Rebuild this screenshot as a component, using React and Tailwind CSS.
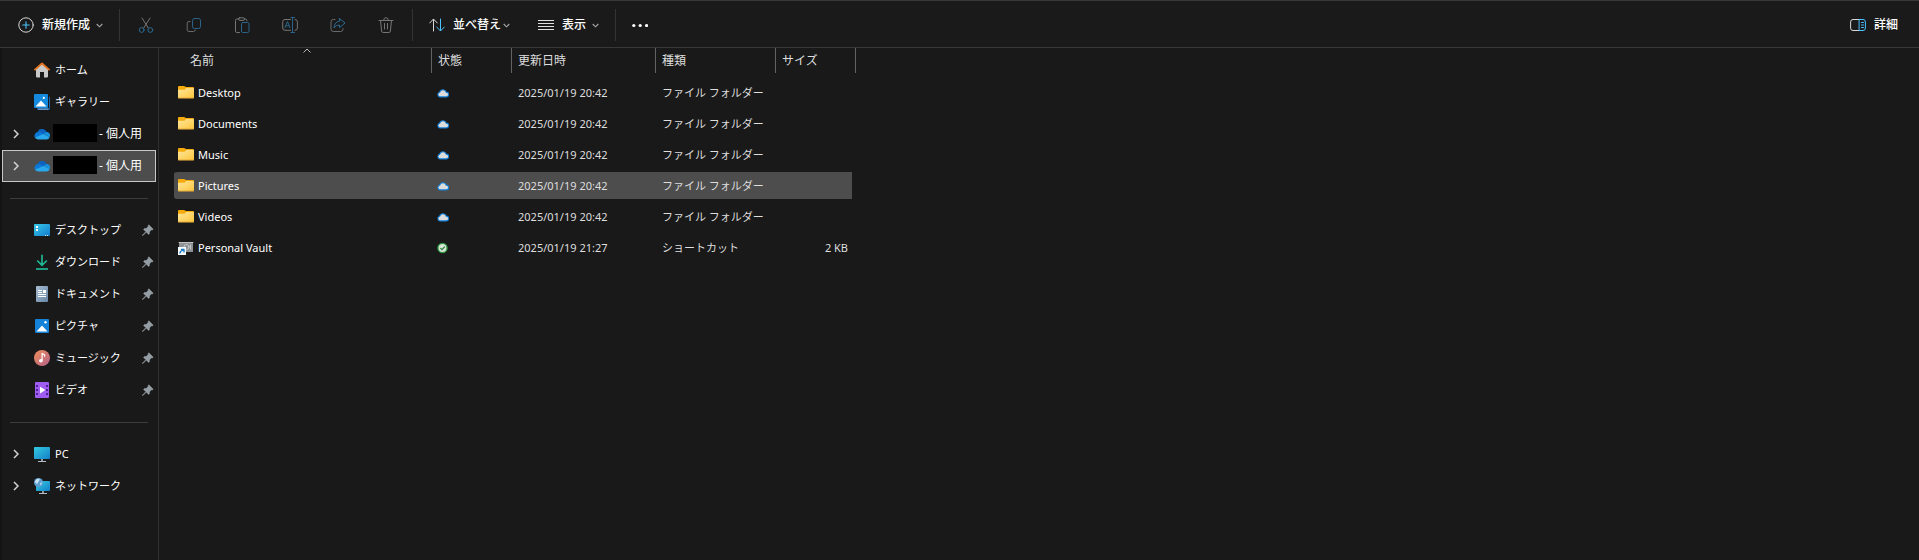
import React, { useState } from "react";

const quickAccess = [
  { name: "デスクトップ", icon: "desktop" },
  { name: "ダウンロード", icon: "download" },
  { name: "ドキュメント", icon: "document" },
  { name: "ピクチャ", icon: "picture" },
  { name: "ミュージック", icon: "music" },
  { name: "ビデオ", icon: "video" },
];

const files = [
  { name: "Desktop", date: "2025/01/19 20:42", type: "ファイル フォルダー", size: "" },
  { name: "Documents", date: "2025/01/19 20:42", type: "ファイル フォルダー", size: "" },
  { name: "Music", date: "2025/01/19 20:42", type: "ファイル フォルダー", size: "" },
  { name: "Pictures", date: "2025/01/19 20:42", type: "ファイル フォルダー", size: "" },
  { name: "Videos", date: "2025/01/19 20:42", type: "ファイル フォルダー", size: "" },
  {
    name: "Personal Vault",
    date: "2025/01/19 21:27",
    type: "ショートカット",
    size: "2 KB",
    shortcut: true,
  },
];

const Svg = ({ children, className = "" }) => (
  <svg
    viewBox="0 0 16 16"
    fill="none"
    strokeLinecap="round"
    strokeLinejoin="round"
    className={`w-4 h-4 shrink-0 ${className}`}
    aria-hidden="true"
  >
    {children}
  </svg>
);

const ChevronDown = () => (
  <svg viewBox="0 0 7 5" fill="none" className="w-[7px] h-[5px] shrink-0" aria-hidden="true">
    <path d="M0.7 1L3.5 3.8L6.3 1" stroke="#a8a8a8" strokeWidth="1.1" />
  </svg>
);

const ChevronRight = () => (
  <svg viewBox="0 0 6 10" fill="none" className="w-[6px] h-[10px]" aria-hidden="true">
    <path d="M1 1L5 5L1 9" stroke="#d6d6d6" strokeWidth="1.5" />
  </svg>
);

const Divider = () => <div className="w-px h-8 bg-[#333333] shrink-0" />;

const editTools = [
  {
    label: "切り取り",
    icon: (
      <Svg>
        <path d="M4 1L10.3 11M12 1L5.7 11" stroke="#757575" />
        <circle cx="3.7" cy="13" r="2.4" stroke="#2b6a90" />
        <circle cx="12.3" cy="13" r="2.4" stroke="#2b6a90" />
      </Svg>
    ),
  },
  {
    label: "コピー",
    icon: (
      <Svg>
        <path
          d="M4 4.5H3A1.8 1.8 0 0 0 1.2 6.3V12.7A1.8 1.8 0 0 0 3 14.5H7.5A1.8 1.8 0 0 0 9.3 13"
          stroke="#6a6a6a"
        />
        <rect x="6.5" y="1.5" width="8" height="10" rx="2" stroke="#2b6488" />
      </Svg>
    ),
  },
  {
    label: "貼り付け",
    icon: (
      <Svg>
        <path
          d="M5 2H2.8A1.3 1.3 0 0 0 1.5 3.3V14.2A1.3 1.3 0 0 0 2.8 15.5H5.5M10 2H11.5A1.3 1.3 0 0 1 12.8 3.3V3.8"
          stroke="#757575"
        />
        <rect x="4.5" y="0.8" width="6" height="2.6" rx="1.2" stroke="#757575" />
        <rect x="7.5" y="5.5" width="7.5" height="10" rx="1.3" stroke="#2b6488" />
      </Svg>
    ),
  },
  {
    label: "名前の変更",
    icon: (
      <Svg>
        <path
          d="M8.5 2.5H3A2.3 2.3 0 0 0 0.7 4.8V11A2.3 2.3 0 0 0 3 13.3H8.5M13 2.5A2.3 2.3 0 0 1 15.4 4.8V11A2.3 2.3 0 0 1 13 13.3"
          stroke="#757575"
        />
        <path d="M3 10.8L5.5 4.5L8 10.8M3.9 8.8H7.1" stroke="#2b6488" />
        <path d="M9 0.5H12.6M9 15.5H12.6M10.5 0.5V15.5" stroke="#2b6488" />
      </Svg>
    ),
  },
  {
    label: "共有",
    icon: (
      <Svg>
        <path
          d="M5 2.5H3.3A2.3 2.3 0 0 0 1 4.8V12.2A2.3 2.3 0 0 0 3.3 14.5H10.7A2.3 2.3 0 0 0 13 12.2V11.5"
          stroke="#6a6a6a"
        />
        <path
          d="M9.5 1.5L15 6L9.5 10.5V8.1C7 8.1 5.3 8.9 4 11C4.2 7 6.2 4.4 9.5 4.1Z"
          stroke="#2b6a90"
        />
      </Svg>
    ),
  },
  {
    label: "削除",
    icon: (
      <Svg>
        <path
          d="M1 3.5H15M5.7 3A2.3 2.3 0 0 1 10.3 3M2.5 3.5L3.6 14A1.6 1.6 0 0 0 5.2 15.5H10.8A1.6 1.6 0 0 0 12.4 14L13.5 3.5M6.5 6.5V12M9.5 6.5V12"
          stroke="#757575"
        />
      </Svg>
    ),
  },
];

const Cloud = () => (
  <Svg>
    <path d="M4.5 12.5A3.6 3.6 0 0 1 3.8 6.4A4.6 4.6 0 0 1 9 3.2L10 10Z" fill="#0f5fb8" />
    <path d="M3.5 6.5A4.8 4.8 0 0 1 12.6 6L8 9.5Z" fill="#0d62bd" />
    <path d="M4 6A4 4 0 0 0 0.8 11.6L9.5 8.1L6.6 6.4A4 4 0 0 0 4 6Z" fill="#0a78d4" />
    <path d="M9.4 8.1L12.2 6A3.4 3.4 0 0 1 15.6 11Z" fill="#1490df" />
    <path
      d="M0.8 11.6L9.4 8L15.6 11A2.9 2.9 0 0 1 12.8 13.4H4A3.8 3.8 0 0 1 0.8 11.6Z"
      fill="#2aa8ec"
    />
  </Svg>
);

const icons = {
  home: (
    <Svg>
      <path d="M2 7L8 2L14 7V14.6A0.8 0.8 0 0 1 13.2 15.4H10V10H6V15.4H2.8A0.8 0.8 0 0 1 2 14.6Z" fill="#c9c9c9" />
      <path d="M1 7.6L8 1.4L15 7.6" stroke="#e8731c" strokeWidth="1.9" />
    </Svg>
  ),
  gallery: (
    <Svg>
      <path d="M3 14.4H15V2.4A1 1 0 0 1 16 3.4V14.6A1.2 1.2 0 0 1 14.8 15.8H4A1 1 0 0 1 3 14.4Z" fill="#1667b5" />
      <path d="M3.5 14.6H14.5V15.8H4.5Z" fill="#78a9df" />
      <rect x="0" y="0" width="14" height="14" rx="1" fill="#148ade" />
      <path d="M1.5 12.4L7 6.4L12.5 12.4Z" fill="#fff" />
      <circle cx="9.8" cy="3.9" r="1.1" fill="#fff" />
    </Svg>
  ),
  cloud: <Cloud />,
  desktop: (
    <Svg>
      <defs>
        <linearGradient id="desk" x1="0" y1="0" x2="1" y2="1">
          <stop offset="0" stopColor="#37cbe8" />
          <stop offset="1" stopColor="#1279cf" />
        </linearGradient>
      </defs>
      <rect x="0" y="2" width="16" height="12" rx="1" fill="url(#desk)" />
      <path d="M2 4H4V6H2ZM2 7H4V9H2Z" fill="#fff" />
      <path d="M11 13H12V14H11ZM13 13H14V14H13Z" fill="#d9f2ff" />
    </Svg>
  ),
  download: (
    <Svg>
      <path d="M8 0.8V11M3.2 6.5L8 11.3L12.8 6.5" stroke="#1eb795" strokeWidth="1.7" strokeLinecap="butt" strokeLinejoin="miter" />
      <path d="M2 15H14" stroke="#1fb796" strokeWidth="1.7" strokeLinecap="butt" />
    </Svg>
  ),
  document: (
    <Svg>
      <defs>
        <linearGradient id="doc" x1="0" y1="0" x2="1" y2="1">
          <stop offset="0" stopColor="#a9bfd3" />
          <stop offset="1" stopColor="#6685a6" />
        </linearGradient>
      </defs>
      <rect x="2" y="0" width="12" height="16" rx="1" fill="url(#doc)" />
      <path d="M4 4.5H8M4 6.5H8M4 8.5H12M4 10.5H12" stroke="#fff" strokeLinecap="butt" />
      <path d="M9 4H12V7H9Z" fill="#fff" />
    </Svg>
  ),
  picture: (
    <Svg>
      <rect x="1" y="1" width="14" height="14" rx="1" fill="#1482d8" />
      <path d="M2.5 13.6L8 7.6L13.5 13.6Z" fill="#fff" />
      <circle cx="11.5" cy="4.3" r="1.2" fill="#fff" />
    </Svg>
  ),
  music: (
    <Svg>
      <defs>
        <linearGradient id="music" x1="0" y1="0" x2="1" y2="1">
          <stop offset="0" stopColor="#f0905a" />
          <stop offset="1" stopColor="#b35f8a" />
        </linearGradient>
      </defs>
      <circle cx="8" cy="8" r="8" fill="url(#music)" />
      <circle cx="6.8" cy="10.8" r="1.8" fill="#fff" />
      <path d="M8.1 10.8V3.4L10.6 4.8V6.2" stroke="#fff" strokeWidth="1.2" />
    </Svg>
  ),
  video: (
    <Svg>
      <rect x="1" y="0" width="14" height="16" rx="1" fill="#a05cf0" />
      <path
        d="M2 3H4V5H2ZM2 7H4V9H2ZM2 11H4V13H2ZM12 3H14V5H12ZM12 7H14V9H12ZM12 11H14V13H12Z"
        fill="#4b2299"
      />
      <path d="M6 4.8L11.5 8L6 11.4Z" fill="#fff" />
    </Svg>
  ),
  pc: (
    <Svg>
      <defs>
        <linearGradient id="pc" x1="0" y1="0" x2="1" y2="1">
          <stop offset="0" stopColor="#35cbe0" />
          <stop offset="1" stopColor="#137fc9" />
        </linearGradient>
      </defs>
      <rect x="0" y="1" width="16" height="12" rx="0.8" fill="url(#pc)" />
      <path d="M7 13H9V15H7Z" fill="#8d979e" />
      <path d="M4 15.5H12" stroke="#b6bec4" strokeLinecap="butt" />
    </Svg>
  ),
  network: (
    <Svg>
      <rect x="2" y="3" width="14" height="10" rx="0.8" fill="url(#pc)" />
      <path d="M8 13H10V15H8Z" fill="#8d979e" />
      <path d="M5 15.5H13" stroke="#b6bec4" strokeLinecap="butt" />
      <circle cx="4.5" cy="4.5" r="4.5" fill="#5e9fd0" />
      <path d="M1 3.5A3.8 3.8 0 0 1 5.5 0.8C6 2.5 4 3.5 3.6 5.5C2.5 6 1.3 5 1 3.5Z" fill="#c9e4f5" />
      <path d="M6 5L8.2 4.2A3.8 3.8 0 0 1 6.2 7.7Z" fill="#a9d0ec" />
    </Svg>
  ),
  folder: (
    <Svg>
      <defs>
        <linearGradient id="folder" x1="0" y1="0" x2="1" y2="1">
          <stop offset="0" stopColor="#ffe69c" />
          <stop offset="1" stopColor="#fcc63c" />
        </linearGradient>
      </defs>
      <path d="M0 2A1 1 0 0 1 1 1H6L8 2H15A1 1 0 0 1 16 3V8H0Z" fill="#f5ab0c" />
      <path d="M0 4.8H6.5L8.2 3H15.5L16 3.5V12.5A0.8 0.8 0 0 1 15.2 13.3H0.8A0.8 0.8 0 0 1 0 12.5Z" fill="url(#folder)" />
      <path d="M0.5 13H15.5" stroke="#dfa12d" strokeWidth="0.8" />
    </Svg>
  ),
  vault: (
    <Svg>
      <rect x="1" y="2" width="14" height="10" fill="#8f9294" />
      <path d="M1 2.5H15" stroke="#c0c2c3" />
      <circle cx="8.5" cy="7" r="2.5" stroke="#c4c6c7" />
      <path d="M12.5 5V9" stroke="#c4c6c7" />
      <rect x="0" y="7" width="8" height="8" fill="#f5f9fc" />
      <path d="M2 13C2.2 11.4 3 10.6 5.5 9.8M3.5 9.3H6V12" stroke="#1577c4" strokeWidth="1.3" />
    </Svg>
  ),
};

const Pin = () => (
  <svg viewBox="0 0 12 12" className="w-3 h-3 shrink-0" aria-hidden="true">
    <path
      d="M6.8 0.8L11.2 5.2L10.2 5.9L9.4 5.8L7.4 7.9L7.4 9.7L6.6 10.4L4.3 8.1L1 11.4L0.5 11.5L0.6 11L3.9 7.7L1.6 5.4L2.3 4.6L4.1 4.6L6.2 2.6L6.1 1.8Z"
      fill="#959ea5"
      stroke="#959ea5"
      strokeWidth="0.6"
    />
  </svg>
);

const StatusCloud = () => (
  <svg viewBox="0 0 12 10" className="block w-3 h-[10px]" role="img" aria-label="オンラインのみ">
    <path
      d="M3 8.9A2.4 2.4 0 0 1 2.7 4.2A3.4 3.4 0 0 1 9.2 4.1A2.4 2.4 0 0 1 9.3 8.9Z"
      fill="#dcdcdc"
      stroke="#1280dc"
      strokeWidth="1.1"
    />
  </svg>
);

const StatusSynced = () => (
  <svg viewBox="0 0 12 12" fill="none" className="block w-3 h-3" role="img" aria-label="使用可能">
    <circle cx="5.5" cy="6" r="4.6" fill="#d8e5d9" stroke="#2f9440" strokeWidth="1.4" />
    <path d="M3.4 6.1L5 7.6L7.8 4.6" stroke="#2a8038" strokeWidth="1.3" />
  </svg>
);

const NavItem = ({ icon, name, expandable, pinned, masked, selected, onClick }) => (
  <li>
    <button
      onClick={onClick}
      className={`w-full h-8 flex items-center pr-px border focus:outline-none ${
        selected ? "bg-[#4d4d4d] border-[#c8c8c8]" : "border-transparent"
      }`}
    >
      <span className="w-[31px] shrink-0 flex pl-[10px]">
        {expandable && <ChevronRight />}
      </span>
      {icons[icon]}
      {masked && <span className="w-11 h-[18px] ml-[3px] mb-[3px] bg-black" />}
      <span
        className={`text-left whitespace-nowrap ${
          masked ? "ml-[2px]" : "ml-[5px] flex-1 text-[11px]"
        }`}
      >
        {name}
      </span>
      {pinned && <Pin />}
    </button>
  </li>
);

const columns = [
  { label: "名前", width: "w-[258px]", pad: "pl-4" },
  { label: "状態", width: "w-20", pad: "pl-[6px]" },
  { label: "更新日時", width: "w-36", pad: "pl-[6px]" },
  { label: "種類", width: "w-[120px]", pad: "pl-[6px]" },
  { label: "サイズ", width: "w-20", pad: "pl-[6px]" },
];

const App = () => {
  const [selectedNav, setSelectedNav] = useState("onedrive2");
  const [selectedFile, setSelectedFile] = useState("Pictures");

  const navProps = (id) => ({
    selected: selectedNav === id,
    onClick: () => setSelectedNav(id),
  });

  return (
    <div className="min-h-screen flex flex-col bg-[#191919] text-white text-[12px] leading-4 font-['Noto_Sans','Noto_Sans_CJK_JP',sans-serif]">
      <header className="h-12 flex items-center pt-[2px] border-y border-[#383838] bg-[#1a1a1a] font-medium shrink-0">
        <button className="flex items-center pl-[18px] pr-4">
          <Svg>
            <circle cx="8" cy="8" r="7.2" stroke="#d8d8d8" />
            <path d="M8 4.8V11.2M4.8 8H11.2" stroke="#4cc2ff" strokeWidth="1.1" />
          </Svg>
          <span className="ml-2 mr-[6px]">新規作成</span>
          <ChevronDown />
        </button>
        <Divider />
        <div className="flex px-[2px]">
          {editTools.map((tool) => (
            <button
              key={tool.label}
              disabled
              aria-label={tool.label}
              className="w-12 h-8 flex items-center justify-center"
            >
              {tool.icon}
            </button>
          ))}
        </div>
        <Divider />
        <button className="flex items-center pl-4 pr-7">
          <Svg>
            <path d="M4.5 14V2.5M0.7 6L4.5 2L8.3 6" stroke="#d8d8d8" />
            <path d="M11.5 2V13.5M7.7 10L11.5 14L15.3 10" stroke="#4cc2ff" />
          </Svg>
          <span className="ml-2 mr-[2px]">並べ替え</span>
          <ChevronDown />
        </button>
        <button className="flex items-center pr-4">
          <Svg>
            <path d="M0 3.5H16M0 6.5H16M0 9.5H16M0 12.5H16" stroke="#e0e0e0" strokeLinecap="butt" />
          </Svg>
          <span className="ml-2 mr-[6px]">表示</span>
          <ChevronDown />
        </button>
        <Divider />
        <button aria-label="その他" className="flex items-center px-4">
          <Svg>
            <circle cx="1.8" cy="8.5" r="1.6" fill="#fff" />
            <circle cx="8.2" cy="8.5" r="1.6" fill="#fff" />
            <circle cx="14.5" cy="8.5" r="1.6" fill="#fff" />
          </Svg>
        </button>
        <button className="flex items-center gap-2 ml-auto mr-[21px]">
          <Svg>
            <path d="M9.5 2.5H3A2.4 2.4 0 0 0 0.6 4.9V11.1A2.4 2.4 0 0 0 3 13.5H9.5" stroke="#d8d8d8" />
            <path
              d="M9.5 2.5H13A2.4 2.4 0 0 1 15.4 4.9V11.1A2.4 2.4 0 0 1 13 13.5H9.5ZM11.5 5.5H13.5M11.5 8H13.5M11.5 10.5H13.5"
              stroke="#4cc2ff"
            />
          </Svg>
          <span>詳細</span>
        </button>
      </header>

      <div className="flex flex-1">
        <nav className="w-[159px] shrink-0 pt-[6px] pr-[2px] border-l-2 border-l-[#141414] border-r border-r-[#303030]">
          <ul>
            <NavItem icon="home" name="ホーム" {...navProps("home")} />
            <NavItem icon="gallery" name="ギャラリー" {...navProps("gallery")} />
            <NavItem icon="cloud" name="- 個人用" expandable masked {...navProps("onedrive1")} />
            <NavItem icon="cloud" name="- 個人用" expandable masked {...navProps("onedrive2")} />
          </ul>
          <hr className="mt-4 -mb-px mx-2 border-[#3c3c3c]" />
          <ul className="pt-4">
            {quickAccess.map((item) => (
              <NavItem key={item.name} {...item} pinned {...navProps(item.name)} />
            ))}
          </ul>
          <hr className="mt-4 -mb-px mx-2 border-[#3c3c3c]" />
          <ul className="pt-4">
            <NavItem icon="pc" name="PC" expandable {...navProps("pc")} />
            <NavItem icon="network" name="ネットワーク" expandable {...navProps("network")} />
          </ul>
        </nav>

        <main className="flex-1 pl-[15px]">
          <table className="table-fixed border-separate border-spacing-0 w-[682px]">
            <thead>
              <tr>
                {columns.map((col, i) => (
                  <th key={col.label} className={`${col.width} h-[29px] p-0 align-top font-normal text-left`}>
                    <div
                      className={`relative h-[25px] flex items-center border-r border-[#636363] text-[#dedede] ${col.pad}`}
                    >
                      {col.label}
                      {i === 0 && (
                        <svg
                          viewBox="0 0 8 5"
                          fill="none"
                          className="absolute top-0 right-[120px] w-2 h-[5px]"
                          aria-hidden="true"
                        >
                          <path d="M0.5 4.5L4 1L7.5 4.5" stroke="#b8b8b8" />
                        </svg>
                      )}
                    </div>
                  </th>
                ))}
              </tr>
            </thead>
            <tbody>
              {files.map((file) => (
                <tr
                  key={file.name}
                  onClick={() => setSelectedFile(file.name)}
                  className={`h-[31px] text-[11px] text-[#dedede] *:p-0 *:border-y-2 *:border-transparent *:bg-clip-padding ${
                    selectedFile === file.name ? "*:bg-[#4d4d4d]" : ""
                  }`}
                >
                  <td className="rounded-l-sm">
                    <div className="flex items-center gap-1 pl-1 text-white">
                      {file.shortcut ? icons.vault : icons.folder}
                      <span>{file.name}</span>
                    </div>
                  </td>
                  <td>
                    <div className="pl-[5px]">
                      {file.shortcut ? <StatusSynced /> : <StatusCloud />}
                    </div>
                  </td>
                  <td>
                    <div className="pl-[6px] whitespace-nowrap">{file.date}</div>
                  </td>
                  <td>
                    <div className="pl-[6px] whitespace-nowrap">{file.type}</div>
                  </td>
                  <td className="border-r-4 rounded-r-sm">
                    <div className="pr-1 text-right">{file.size}</div>
                  </td>
                </tr>
              ))}
            </tbody>
          </table>
        </main>
      </div>
    </div>
  );
};

export default App;
